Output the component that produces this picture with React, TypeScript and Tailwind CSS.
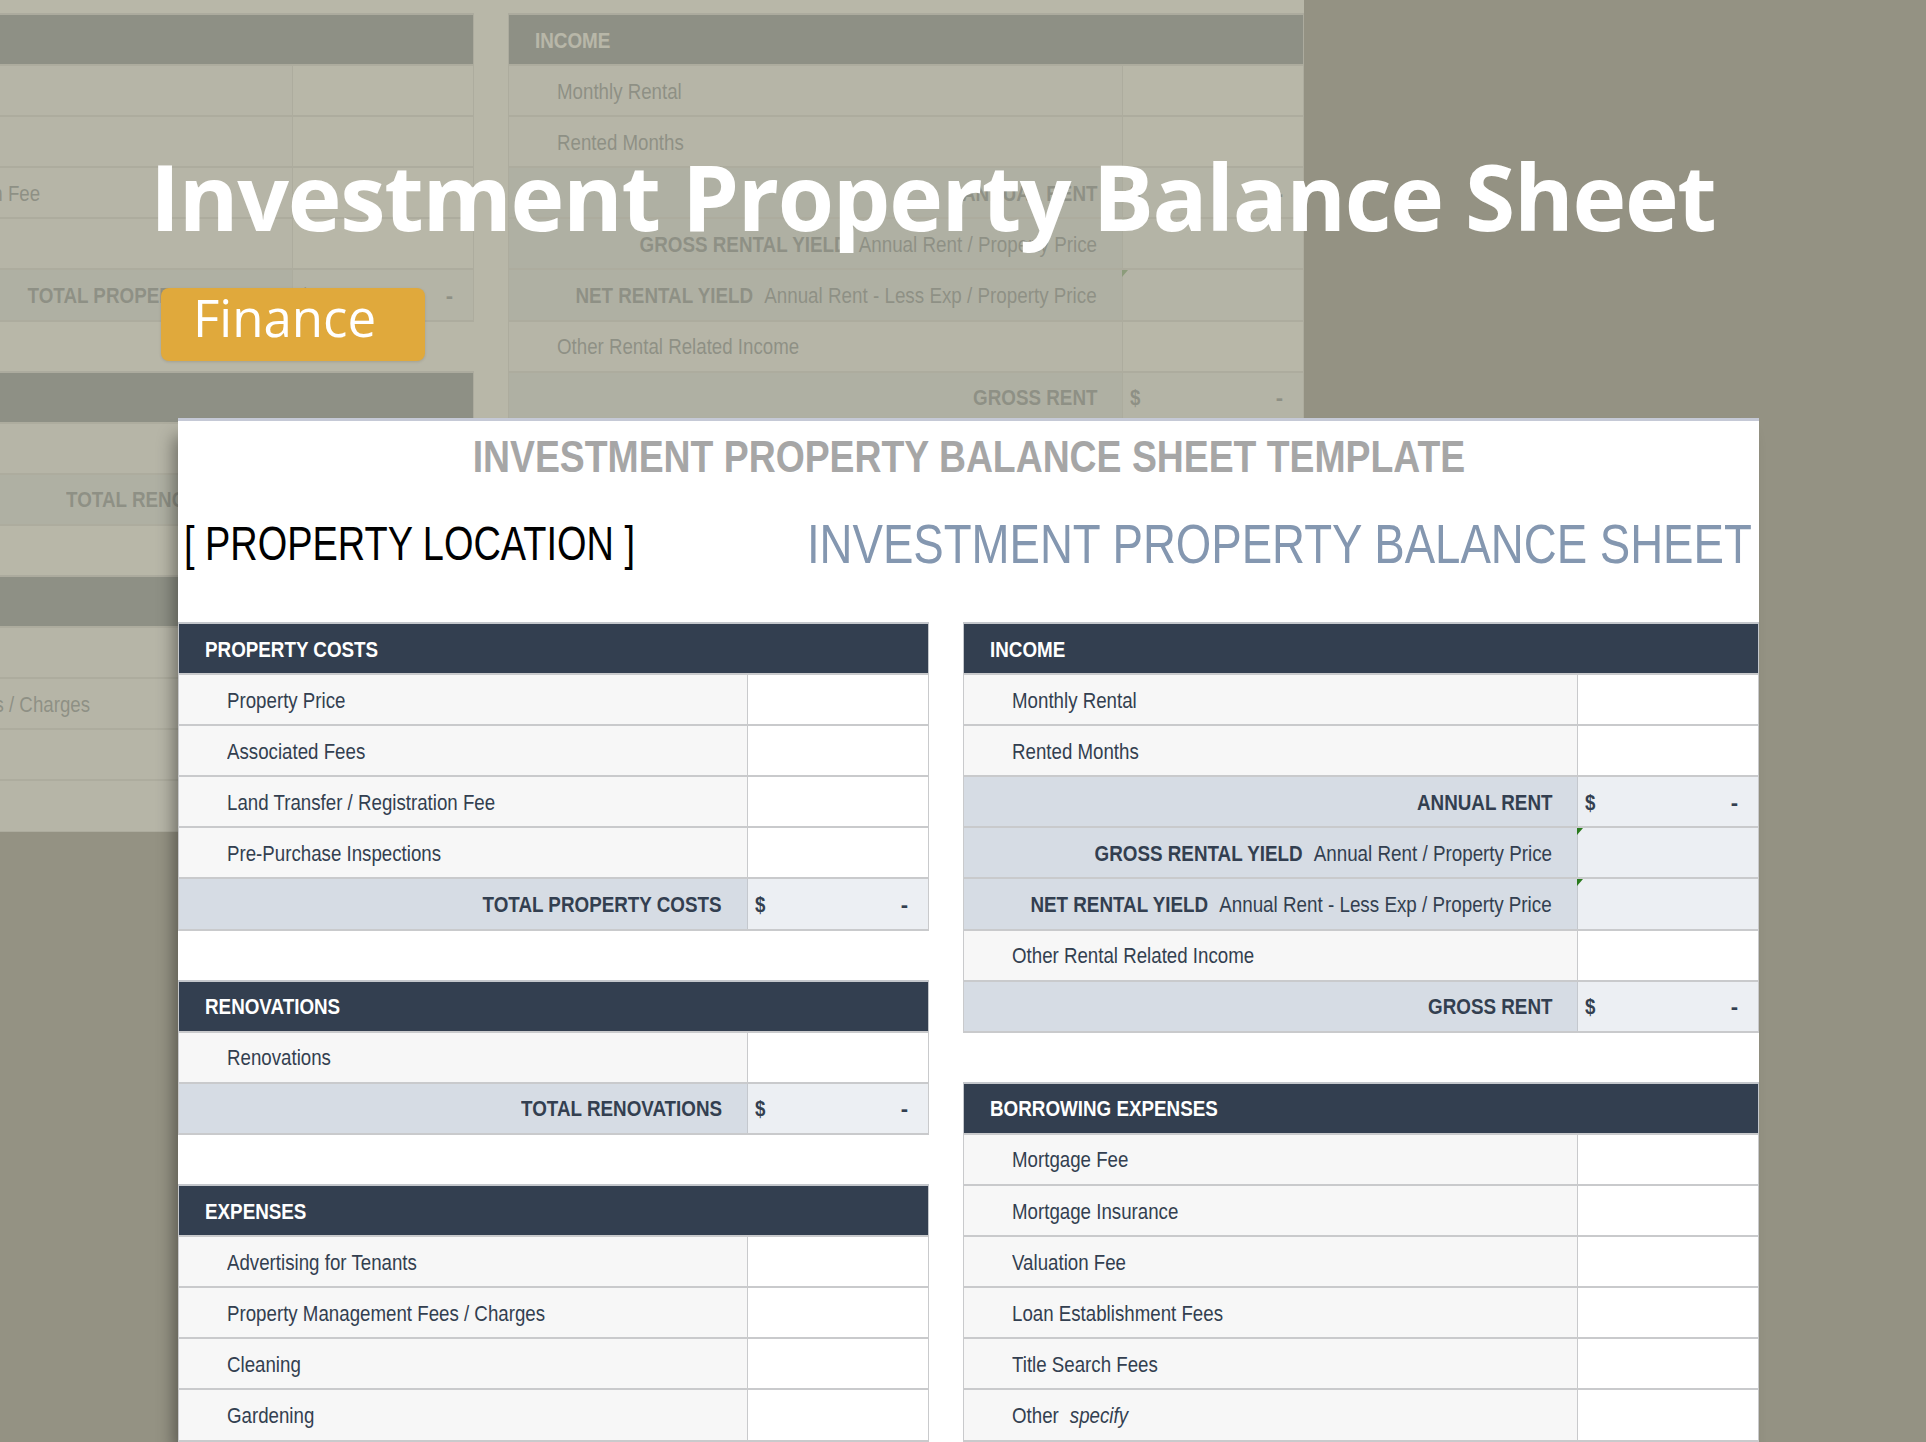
import React from "react";

type Row =
  | { t: "head"; label: string }
  | { t: "item"; label: React.ReactNode }
  | { t: "total"; label: React.ReactNode; money?: boolean; mark?: boolean }
  | { t: "blank" };

const left: Row[] = [
  { t: "head", label: "PROPERTY COSTS" },
  { t: "item", label: "Property Price" },
  { t: "item", label: "Associated Fees" },
  { t: "item", label: "Land Transfer / Registration Fee" },
  { t: "item", label: "Pre-Purchase Inspections" },
  { t: "total", label: <b>TOTAL PROPERTY COSTS</b>, money: true },
  { t: "blank" },
  { t: "head", label: "RENOVATIONS" },
  { t: "item", label: "Renovations" },
  { t: "total", label: <b>TOTAL RENOVATIONS</b>, money: true },
  { t: "blank" },
  { t: "head", label: "EXPENSES" },
  { t: "item", label: "Advertising for Tenants" },
  { t: "item", label: "Property Management Fees / Charges" },
  { t: "item", label: "Cleaning" },
  { t: "item", label: "Gardening" },
];

const right: Row[] = [
  { t: "head", label: "INCOME" },
  { t: "item", label: "Monthly Rental" },
  { t: "item", label: "Rented Months" },
  { t: "total", label: <b>ANNUAL RENT</b>, money: true },
  {
    t: "total",
    mark: true,
    label: (
      <>
        <b>GROSS RENTAL YIELD</b>
        <span className="ml-[13px]">Annual Rent / Property Price</span>
      </>
    ),
  },
  {
    t: "total",
    mark: true,
    label: (
      <>
        <b>NET RENTAL YIELD</b>
        <span className="ml-[13px]">Annual Rent - Less Exp / Property Price</span>
      </>
    ),
  },
  { t: "item", label: "Other Rental Related Income" },
  { t: "total", label: <b>GROSS RENT</b>, money: true },
  { t: "blank" },
  { t: "head", label: "BORROWING EXPENSES" },
  { t: "item", label: "Mortgage Fee" },
  { t: "item", label: "Mortgage Insurance" },
  { t: "item", label: "Valuation Fee" },
  { t: "item", label: "Loan Establishment Fees" },
  { t: "item", label: "Title Search Fees" },
  {
    t: "item",
    label: (
      <>
        Other<i className="ml-[13px]">specify</i>
      </>
    ),
  },
];

function Table({ rows, valueW }: { rows: Row[]; valueW: string }) {
  return (
    <div className="flex flex-col border-b-2 border-[#c9cacc]">
      {rows.map((r, i) => {
        if (r.t === "blank") return <div key={i} className="h-[51.1px] border-t-2 border-[#c9cacc]" />;
        if (r.t === "head")
          return (
            <div
              key={i}
              className="h-[51.1px] flex items-center pl-[26px] pt-[2px] bg-[#333f50] border-t-2 border-x border-[#c4c7cc] text-white font-bold"
            >
              <span className="inline-block whitespace-nowrap origin-left scale-x-[0.855]">{r.label}</span>
            </div>
          );
        const isTotal = r.t === "total";
        return (
          <div key={i} className="h-[51.1px] flex border-t-2 border-x border-[#c9cacc]">
            <div
              className={
                isTotal
                  ? "flex-1 min-w-0 flex items-center justify-end pr-[25px] pt-[2px] bg-[#d6dce4] border-r border-[#c4c8ce]"
                  : "flex-1 min-w-0 flex items-center pl-[48px] pt-[2px] bg-[#f7f7f7] border-r border-[#c9cacc]"
              }
            >
              <span
                className={
                  isTotal
                    ? "inline-block shrink-0 whitespace-nowrap origin-right scale-x-[0.855]"
                    : "inline-block shrink-0 whitespace-nowrap origin-left scale-x-[0.85]"
                }
              >
                {r.label}
              </span>
            </div>
            <div
              className={`${valueW} shrink-0 relative flex items-center justify-between pl-[7px] pr-[20px] pt-[2px] font-bold ${
                isTotal ? "bg-[#eceff3]" : "bg-white"
              }`}
            >
              {r.t === "total" && r.money && <span className="inline-block origin-left scale-x-[0.85]">$</span>}
              {r.t === "total" && r.money && <span>-</span>}
              {r.t === "total" && r.mark && (
                <svg className="absolute left-[-1px] top-0" width="7" height="7" viewBox="0 0 7 7">
                  <path d="M0 0H6L0 7Z" fill="#2a7a1e" />
                </svg>
              )}
            </div>
          </div>
        );
      })}
    </div>
  );
}

function Sheet() {
  return (
    <div className="w-[1581px] h-[1024px] bg-white text-[#333f50] text-[22px] leading-none font-['Liberation_Sans',Arial,sans-serif] flex flex-col overflow-hidden">
      <div className="h-[3px] shrink-0 bg-[#c5c9d6]" />
      <div className="h-[70px] shrink-0 flex items-center justify-center pt-[1px] text-[45px] font-bold text-[#a6a6a6]">
        <span className="inline-block whitespace-nowrap scale-x-[0.83]">INVESTMENT PROPERTY BALANCE SHEET TEMPLATE</span>
      </div>
      <div className="h-[131px] shrink-0 relative flex items-center pl-[6px] pb-[25px]">
        <span className="inline-block shrink-0 whitespace-nowrap origin-left scale-x-[0.79] text-[48px] text-black">
          [ PROPERTY LOCATION ]
        </span>
        <span className="absolute right-[7px] top-[25px] whitespace-nowrap origin-right scale-x-[0.814] text-[56px] text-[#8497b0]">
          INVESTMENT PROPERTY BALANCE SHEET
        </span>
      </div>
      <div className="flex shrink-0 gap-[34px]">
        <div className="w-[751px]">
          <Table rows={left} valueW="w-[180px]" />
        </div>
        <div className="w-[796px]">
          <Table rows={right} valueW="w-[180px]" />
        </div>
      </div>
    </div>
  );
}

export default function App() {
  return (
    <div className="relative w-[1926px] h-[1442px] bg-[#949283] overflow-hidden">
      <div className="absolute left-0 top-0 w-[1304px] h-[832px] bg-[#a6a593] overflow-hidden">
        <div className="ml-[-277px] mt-[-191px] opacity-20 w-[1581px]">
          <Sheet />
        </div>
      </div>
      <div className="absolute left-[178px] top-[418px] shadow-[-8px_14px_16px_-4px_rgba(0,0,0,0.4)]">
        <Sheet />
      </div>
      <h1 className="absolute left-[150px] top-[134px] text-white text-[91px] leading-[124px] font-bold tracking-[-1.3px] font-['Open_Sans',sans-serif] whitespace-nowrap">
        Investment Property Balance Sheet
      </h1>
      <div className="absolute left-[161px] top-[288px] w-[264px] h-[73px] rounded-[8px] bg-[#e0a93c] pl-[32px] pb-[14px] flex items-center text-white text-[51px] font-medium leading-none font-['Open_Sans',sans-serif] shadow-[0_1px_3px_rgba(0,0,0,0.12)]">
        Finance
      </div>
    </div>
  );
}
